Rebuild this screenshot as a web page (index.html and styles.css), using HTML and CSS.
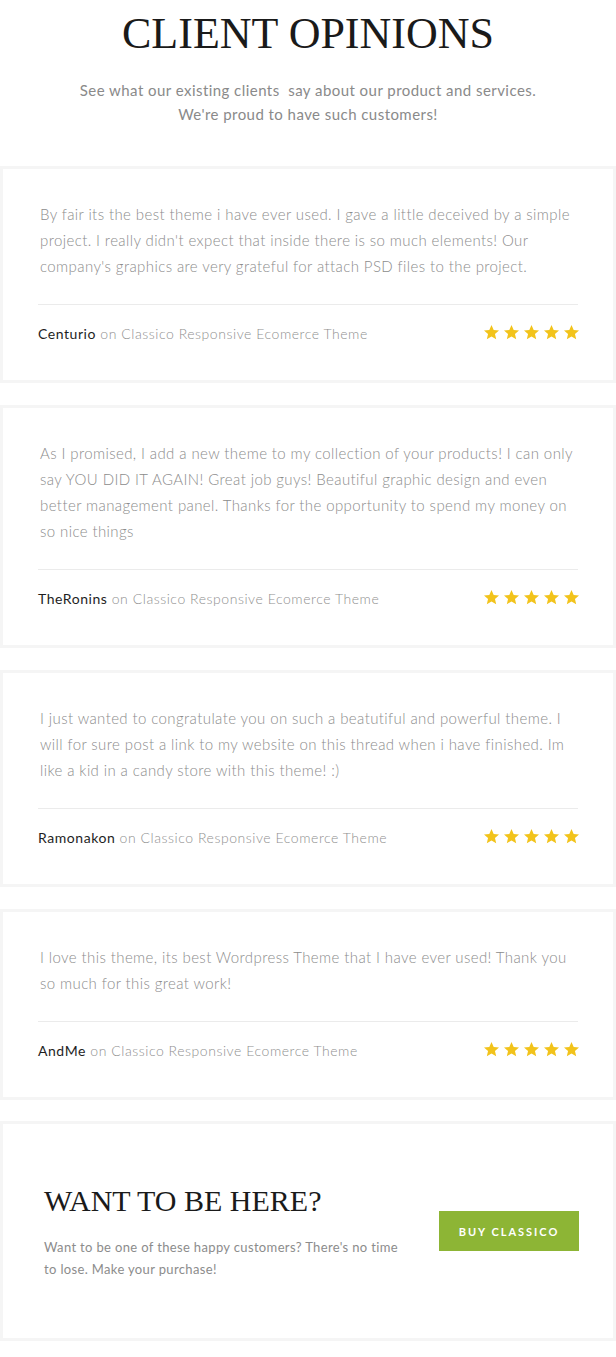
FILE: index.html
```html
<!DOCTYPE html>
<html lang="en">

<head>
    <meta charset="UTF-8">
    <meta name="viewport" content="width=device-width, initial-scale=1.0">
    <title>Client Opinions</title>
    <link rel="stylesheet" href="styles.css">
</head>

<body>
    <div class="intro">
        <h1 class="intro-title">CLIENT OPINIONS</h1>
        <p class="intro-text">See what our existing clients&nbsp; say about our product and services.<br>We're proud to have such customers!</p>
    </div>

    <div class="opinion-list">
        <div class="opinion">
            <p class="opinion-text">By fair its the best theme i have ever used. I gave a little deceived by a simple project. I really didn't expect that inside there is so much elements! Our company's graphics are very grateful for attach PSD files to the project.</p>
            <div class="opinion-footer">
                <div class="author"><span class="author-name">Centurio</span> on Classico Responsive Ecomerce Theme</div>
                <div class="stars">
                    <svg viewBox="0 0 24 24"><path d="M12 1.5l3.1 7 7.5.6-5.7 5 1.7 7.4L12 17.6l-6.6 3.9 1.7-7.4-5.7-5 7.5-.6z"/></svg>
                    <svg viewBox="0 0 24 24"><path d="M12 1.5l3.1 7 7.5.6-5.7 5 1.7 7.4L12 17.6l-6.6 3.9 1.7-7.4-5.7-5 7.5-.6z"/></svg>
                    <svg viewBox="0 0 24 24"><path d="M12 1.5l3.1 7 7.5.6-5.7 5 1.7 7.4L12 17.6l-6.6 3.9 1.7-7.4-5.7-5 7.5-.6z"/></svg>
                    <svg viewBox="0 0 24 24"><path d="M12 1.5l3.1 7 7.5.6-5.7 5 1.7 7.4L12 17.6l-6.6 3.9 1.7-7.4-5.7-5 7.5-.6z"/></svg>
                    <svg viewBox="0 0 24 24"><path d="M12 1.5l3.1 7 7.5.6-5.7 5 1.7 7.4L12 17.6l-6.6 3.9 1.7-7.4-5.7-5 7.5-.6z"/></svg>
                </div>
            </div>
        </div>

        <div class="opinion">
            <p class="opinion-text">As I promised, I add a new theme to my collection of your products! I can only say YOU DID IT AGAIN! Great job guys! Beautiful graphic design and even better management panel. Thanks for the opportunity to spend my money on so nice things</p>
            <div class="opinion-footer">
                <div class="author"><span class="author-name">TheRonins</span> on Classico Responsive Ecomerce Theme</div>
                <div class="stars">
                    <svg viewBox="0 0 24 24"><path d="M12 1.5l3.1 7 7.5.6-5.7 5 1.7 7.4L12 17.6l-6.6 3.9 1.7-7.4-5.7-5 7.5-.6z"/></svg>
                    <svg viewBox="0 0 24 24"><path d="M12 1.5l3.1 7 7.5.6-5.7 5 1.7 7.4L12 17.6l-6.6 3.9 1.7-7.4-5.7-5 7.5-.6z"/></svg>
                    <svg viewBox="0 0 24 24"><path d="M12 1.5l3.1 7 7.5.6-5.7 5 1.7 7.4L12 17.6l-6.6 3.9 1.7-7.4-5.7-5 7.5-.6z"/></svg>
                    <svg viewBox="0 0 24 24"><path d="M12 1.5l3.1 7 7.5.6-5.7 5 1.7 7.4L12 17.6l-6.6 3.9 1.7-7.4-5.7-5 7.5-.6z"/></svg>
                    <svg viewBox="0 0 24 24"><path d="M12 1.5l3.1 7 7.5.6-5.7 5 1.7 7.4L12 17.6l-6.6 3.9 1.7-7.4-5.7-5 7.5-.6z"/></svg>
                </div>
            </div>
        </div>

        <div class="opinion">
            <p class="opinion-text">I just wanted to congratulate you on such a beatutiful and powerful theme. I will for sure post a link to my website on this thread when i have finished. Im like a kid in a candy store with this theme! :)</p>
            <div class="opinion-footer">
                <div class="author"><span class="author-name">Ramonakon</span> on Classico Responsive Ecomerce Theme</div>
                <div class="stars">
                    <svg viewBox="0 0 24 24"><path d="M12 1.5l3.1 7 7.5.6-5.7 5 1.7 7.4L12 17.6l-6.6 3.9 1.7-7.4-5.7-5 7.5-.6z"/></svg>
                    <svg viewBox="0 0 24 24"><path d="M12 1.5l3.1 7 7.5.6-5.7 5 1.7 7.4L12 17.6l-6.6 3.9 1.7-7.4-5.7-5 7.5-.6z"/></svg>
                    <svg viewBox="0 0 24 24"><path d="M12 1.5l3.1 7 7.5.6-5.7 5 1.7 7.4L12 17.6l-6.6 3.9 1.7-7.4-5.7-5 7.5-.6z"/></svg>
                    <svg viewBox="0 0 24 24"><path d="M12 1.5l3.1 7 7.5.6-5.7 5 1.7 7.4L12 17.6l-6.6 3.9 1.7-7.4-5.7-5 7.5-.6z"/></svg>
                    <svg viewBox="0 0 24 24"><path d="M12 1.5l3.1 7 7.5.6-5.7 5 1.7 7.4L12 17.6l-6.6 3.9 1.7-7.4-5.7-5 7.5-.6z"/></svg>
                </div>
            </div>
        </div>

        <div class="opinion">
            <p class="opinion-text">I love this theme, its best Wordpress Theme that I have ever used! Thank you so much for this great work!</p>
            <div class="opinion-footer">
                <div class="author"><span class="author-name">AndMe</span> on Classico Responsive Ecomerce Theme</div>
                <div class="stars">
                    <svg viewBox="0 0 24 24"><path d="M12 1.5l3.1 7 7.5.6-5.7 5 1.7 7.4L12 17.6l-6.6 3.9 1.7-7.4-5.7-5 7.5-.6z"/></svg>
                    <svg viewBox="0 0 24 24"><path d="M12 1.5l3.1 7 7.5.6-5.7 5 1.7 7.4L12 17.6l-6.6 3.9 1.7-7.4-5.7-5 7.5-.6z"/></svg>
                    <svg viewBox="0 0 24 24"><path d="M12 1.5l3.1 7 7.5.6-5.7 5 1.7 7.4L12 17.6l-6.6 3.9 1.7-7.4-5.7-5 7.5-.6z"/></svg>
                    <svg viewBox="0 0 24 24"><path d="M12 1.5l3.1 7 7.5.6-5.7 5 1.7 7.4L12 17.6l-6.6 3.9 1.7-7.4-5.7-5 7.5-.6z"/></svg>
                    <svg viewBox="0 0 24 24"><path d="M12 1.5l3.1 7 7.5.6-5.7 5 1.7 7.4L12 17.6l-6.6 3.9 1.7-7.4-5.7-5 7.5-.6z"/></svg>
                </div>
            </div>
        </div>
    </div>

    <div class="call-to-action">
        <div class="cta-content">
            <h2 class="cta-title">WANT TO BE HERE?</h2>
            <p class="cta-text">Want to be one of these happy customers? There's no time to lose. Make your purchase!</p>
        </div>
        <button class="cta-button">BUY CLASSICO</button>
    </div>
</body>

</html>
```

FILE: styles.css
```css
* {
    box-sizing: border-box;
}

body {
    margin: 0;
    background-color: #fff;
    font-family: Lato, "Open Sans", sans-serif;
    color: #888;
}

.intro {
    padding-top: 12px;
    text-align: center;
}

.intro-title {
    margin: 0;
    font-family: "Liberation Serif", serif;
    font-size: 44px;
    line-height: 44px;
    font-weight: normal;
    color: #1a1a1a;
}

.intro-text {
    margin: 22px 0 0;
    font-size: 15px;
    line-height: 24px;
    font-weight: 400;
    letter-spacing: 0.45px;
    color: #8a8a8a;
}

.opinion-list {
    display: flex;
    flex-direction: column;
    gap: 22px;
    margin-top: 40px;
}

.opinion {
    border: 3px solid #f5f5f5;
    padding: 32px 35px 0;
}

.opinion-text {
    margin: 0;
    padding: 0 2px;
    font-size: 15px;
    line-height: 26px;
    font-weight: 300;
    letter-spacing: 0.4px;
    color: #8c8c8c;
}

.opinion-footer {
    display: flex;
    justify-content: space-between;
    align-items: center;
    margin-top: 25px;
    padding: 20px 0 37px;
    border-top: 1px solid #ebebeb;
}

.author {
    font-size: 14px;
    line-height: 18px;
    font-weight: 300;
    letter-spacing: 0.55px;
    color: #8f8f8f;
}

.author-name {
    color: #1e1e1e;
    font-weight: 400;
}

.stars {
    display: flex;
    gap: 3px;
    margin-right: -2px;
    margin-top: -3px;
}

.stars svg {
    width: 17px;
    height: 17px;
    fill: #f2c31b;
}

.call-to-action {
    display: flex;
    justify-content: space-between;
    align-items: center;
    margin-top: 21px;
    height: 220px;
    border: 3px solid #f5f5f5;
    padding: 0 34px 0 41px;
}

.cta-content {
    width: 362px;
}

.cta-title {
    margin: 0 0 17px;
    font-family: "Liberation Serif", serif;
    font-size: 30px;
    line-height: 36px;
    font-weight: normal;
    color: #1a1a1a;
}

.cta-text {
    margin: 0;
    font-size: 13px;
    line-height: 22px;
    letter-spacing: 0.35px;
    color: #8c8c8c;
}

.cta-button {
    width: 140px;
    height: 40px;
    border: none;
    outline: none;
    cursor: pointer;
    background-color: #8db535;
    color: #fff;
    font-family: Lato, sans-serif;
    font-size: 11px;
    font-weight: 700;
    letter-spacing: 2px;
}
```
